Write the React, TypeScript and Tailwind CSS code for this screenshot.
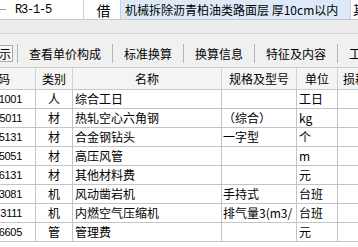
import React from "react";

const cjk = { fontFamily: '"Noto Sans CJK SC", "Noto Sans", sans-serif' };
const num = { fontFamily: '"Liberation Sans", Arial, sans-serif' };

const rows = [
  ["1001", "人", "综合工日", "", "工日"],
  ["5011", "材", "热轧空心六角钢", "（综合）", "kg"],
  ["5131", "材", "合金钢钻头", "一字型", "个"],
  ["5051", "材", "高压风管", "", "m"],
  ["6131", "材", "其他材料费", "", "元"],
  ["3081", "机", "风动凿岩机", "手持式", "台班"],
  ["3111", "机", "内燃空气压缩机", "排气量3(m3/", "台班"],
  ["6605", "管", "管理费", "", "元"],
];

const tabs = ["查看单价构成", "标准换算", "换算信息", "特征及内容"];

export default function App() {
  return (
    <div className="w-[358px] h-[247px] overflow-hidden bg-white text-black text-[12px] leading-none" style={cjk}>
      {/* top row */}
      <div className="h-[20px] flex border-b border-[#c8c8c8] bg-white">
        <div className="w-[84px] shrink-0 border-r border-[#d0d0d0] flex items-center relative">
          <div className="w-[6px] h-px bg-[#a0a0a0] mr-[9px]" />
          <span className="text-[12px] tracking-[-1.2px]" style={{ fontFamily: '"Liberation Mono", monospace' }}>R3-1-5</span>
        </div>
        <div className="w-[37px] shrink-0 border-r border-[#d0d0d0] flex items-center justify-center pl-[3px] text-[14px]">借</div>
        <div className="w-[230px] shrink-0 border-r border-[#d0d0d0] bg-[#dde9f8] flex items-center pl-[4px] whitespace-nowrap overflow-hidden">
          机械拆除沥青柏油类路面层 厚10cm以内
        </div>
        <div className="flex-1 flex items-center pl-[2px] overflow-hidden whitespace-nowrap">其</div>
      </div>
      {/* grey band */}
      <div className="h-[14px] bg-[#ececec] border-b border-[#d4d4d4]" />
      {/* tab row */}
      <div className="h-[33px] bg-[#f0f0f0] flex items-center pt-[6px] whitespace-nowrap overflow-hidden">
        <div className="h-[17px] w-[13px] shrink-0 border border-[#a8a8a8] border-l-0 bg-[#f8f8f8] flex items-center justify-end pr-[1px] overflow-hidden">
          <span>示</span>
        </div>
        <div className="w-[4px] shrink-0" />
        {tabs.map((t) => (
          <React.Fragment key={t}>
            <div className="w-px h-[19px] bg-[#b4b4b4] shrink-0" />
            <div className="px-[11px] shrink-0">{t}</div>
          </React.Fragment>
        ))}
        <div className="w-px h-[19px] bg-[#b4b4b4] shrink-0" />
        <div className="px-[11px] shrink-0">工程量</div>
      </div>
      {/* header */}
      <div className="h-[23px] flex bg-[#f4f4f4] border-t border-b border-[#c8c8c8] whitespace-nowrap">
        <div className="w-[36px] shrink-0 border-r border-[#d0d0d0] flex items-center justify-end pr-[25px] overflow-hidden">编码</div>
        <div className="w-[37px] shrink-0 border-r border-[#d0d0d0] flex items-center justify-center">类别</div>
        <div className="w-[149px] shrink-0 border-r border-[#d0d0d0] flex items-center justify-center">名称</div>
        <div className="w-[75px] shrink-0 border-r border-[#d0d0d0] flex items-center justify-center">规格及型号</div>
        <div className="w-[41px] shrink-0 border-r border-[#d0d0d0] flex items-center justify-center">单位</div>
        <div className="flex-1 flex items-center pl-[5px] overflow-hidden">损耗率</div>
      </div>
      {/* rows */}
      {rows.map((r) => (
        <div key={r[0]} className="h-[19px] flex border-b border-[#c4c4c4] whitespace-nowrap">
          <div className="w-[36px] shrink-0 border-r border-[#c4c4c4] flex items-center justify-end pr-[13px] overflow-hidden text-[11px] tracking-[-0.3px]" style={num}>
            {r[0]}
          </div>
          <div className="w-[37px] shrink-0 border-r border-[#c4c4c4] flex items-center justify-center">{r[1]}</div>
          <div className="w-[149px] shrink-0 border-r border-[#c4c4c4] flex items-center pl-[2px] overflow-hidden">{r[2]}</div>
          <div className="w-[75px] shrink-0 border-r border-[#c4c4c4] flex items-center pl-[1px] overflow-hidden">{r[3]}</div>
          <div className="w-[41px] shrink-0 border-r border-[#c4c4c4] flex items-center pl-[2px] overflow-hidden">{r[4]}</div>
          <div className="flex-1" />
        </div>
      ))}
    </div>
  );
}
